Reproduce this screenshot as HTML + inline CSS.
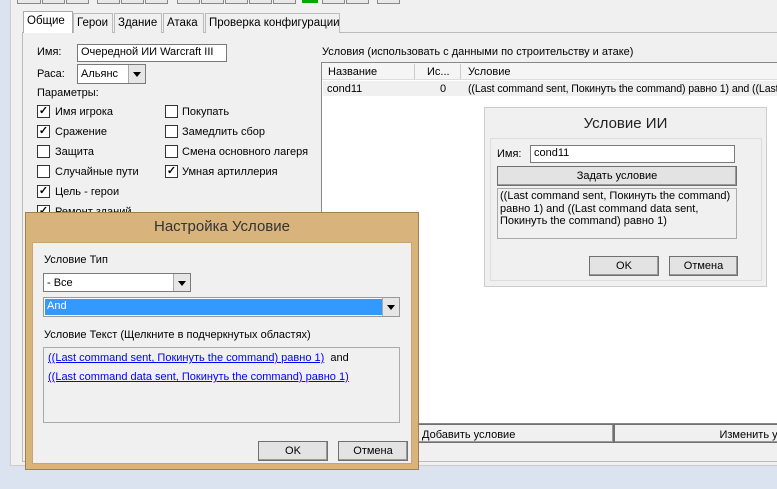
<!DOCTYPE html>
<html><head><meta charset="utf-8"><style>
*{margin:0;padding:0;box-sizing:border-box}
body{width:777px;height:489px;overflow:hidden;background:#dae3ef;position:relative;font-family:"Liberation Sans",sans-serif;font-size:11px;color:#000}
.a{position:absolute;white-space:nowrap}
.win{left:10px;top:0;width:767px;height:466px;background:#f0f0f0;border-left:1px solid #ccc;border-bottom:1px solid #ccc}
.tb{top:0;height:4px;border:1px solid #888;border-top:none;background:#e8e8e8}
.tab{top:13px;height:20px;border:1px solid #bbb;border-bottom:none;background:#f0f0f0;padding:3px 3px;font-size:11.5px;white-space:nowrap;overflow:hidden}
.panel{left:22px;top:32px;width:755px;height:430px;border:1px solid #bbb;border-right:none;background:#f0f0f0}
.inp{background:#fff;border:1px solid #7a7a7a;padding:1px 3px;font-size:11px}
.cb{width:13px;height:13px;border:1px solid #333;background:#fff;font-size:11px;line-height:11px;text-align:center;font-weight:bold}
.btn{border:1px solid #707070;background:#e3e3e3;text-align:center;font-size:11px;box-shadow:inset -1px -1px 0 #999}
.arr{width:17px;border-left:1px solid #aaa;background:#e6e6e6}
.arr:after{content:"";position:absolute;left:4px;top:7px;border:4px solid transparent;border-top:5px solid #000}
a{color:#0000ff;text-decoration:underline}
</style></head><body>
<div class="a win"></div>
<div class="a tb" style="left:17px;width:24px"></div><div class="a tb" style="left:42px;width:23px"></div><div class="a tb" style="left:66px;width:23px"></div>
<div class="a tb" style="left:97px;width:23px"></div><div class="a tb" style="left:121px;width:23px"></div><div class="a tb" style="left:145px;width:23px"></div>
<div class="a tb" style="left:177px;width:23px"></div><div class="a tb" style="left:201px;width:23px"></div><div class="a tb" style="left:225px;width:23px"></div><div class="a tb" style="left:249px;width:23px"></div><div class="a tb" style="left:273px;width:23px"></div>
<div class="a" style="left:302px;top:0;width:16px;height:3px;background:#0a0"></div>
<div class="a tb" style="left:322px;width:23px"></div><div class="a tb" style="left:346px;width:23px"></div><div class="a tb" style="left:377px;width:23px"></div>
<div class="a panel"></div>
<div class="a tab" style="left:23px;top:11px;height:22px;width:50px;background:#fff;border-color:#aaa">Общие</div>
<div class="a tab" style="left:73px;width:40px">Герои</div>
<div class="a tab" style="left:114px;width:48px">Здание</div>
<div class="a tab" style="left:163px;width:41px">Атака</div>
<div class="a tab" style="left:205px;width:135px">Проверка конфигурации</div>
<div class="a" style="left:37px;top:46px">Имя:</div>
<div class="a inp" style="left:77px;top:44px;width:150px;height:18px">Очередной ИИ Warcraft III</div>
<div class="a" style="left:37px;top:68px">Раса:</div>
<div class="a inp" style="left:77px;top:64px;width:69px;height:20px;padding-top:3px">Альянс</div>
<div class="a arr" style="left:128px;top:65px;height:18px"></div>
<div class="a" style="left:37px;top:87px">Параметры:</div>
<div class="a cb" style="left:37px;top:105px">✓</div><div class="a" style="left:55px;top:106px">Имя игрока</div>
<div class="a cb" style="left:37px;top:125px">✓</div><div class="a" style="left:55px;top:126px">Сражение</div>
<div class="a cb" style="left:37px;top:145px"></div><div class="a" style="left:55px;top:146px">Защита</div>
<div class="a cb" style="left:37px;top:165px"></div><div class="a" style="left:55px;top:166px">Случайные пути</div>
<div class="a cb" style="left:37px;top:185px">✓</div><div class="a" style="left:55px;top:186px">Цель - герои</div>
<div class="a cb" style="left:37px;top:205px">✓</div><div class="a" style="left:55px;top:206px">Ремонт зданий</div>
<div class="a cb" style="left:165px;top:105px"></div><div class="a" style="left:182px;top:106px">Покупать</div>
<div class="a cb" style="left:165px;top:125px"></div><div class="a" style="left:182px;top:126px">Замедлить сбор</div>
<div class="a cb" style="left:165px;top:145px"></div><div class="a" style="left:182px;top:146px">Смена основного лагеря</div>
<div class="a cb" style="left:165px;top:165px">✓</div><div class="a" style="left:182px;top:166px">Умная артиллерия</div>
<div class="a" style="left:322px;top:46px">Условия (использовать с данными по строительству и атаке)</div>
<div class="a" style="left:321px;top:62px;width:456px;height:362px;background:#fff;border:1px solid #888;border-right:none"></div>
<div class="a" style="left:322px;top:63px;width:455px;height:17px;background:#f5f5f5;border-bottom:1px solid #ddd"></div>
<div class="a" style="left:328px;top:66px">Название</div>
<div class="a" style="left:414px;top:64px;width:1px;height:15px;background:#ccc"></div>
<div class="a" style="left:427px;top:66px">Ис...</div>
<div class="a" style="left:460px;top:64px;width:1px;height:15px;background:#ccc"></div>
<div class="a" style="left:468px;top:66px">Условие</div>
<div class="a" style="left:323px;top:81px;width:454px;height:15px;background:#f0f0f0"></div>
<div class="a" style="left:327px;top:83px">cond11</div>
<div class="a" style="left:440px;top:83px">0</div>
<div class="a" style="left:468px;top:83px;font-size:10.6px;letter-spacing:-0.1px">((Last command sent, Покинуть the command) равно 1) and ((Last</div>
<div class="a btn" style="left:418px;top:424px;width:196px;height:19px;text-align:left;padding:4px 3px;background:#f0f0f0">Добавить условие</div>
<div class="a btn" style="left:614px;top:424px;width:170px;height:19px;text-align:right;padding:4px 0;background:#f0f0f0;overflow:hidden">Изменить ус</div>
<!-- Условие ИИ -->
<div class="a" style="left:484px;top:107px;width:283px;height:180px;background:#f0f0f0;border:1px solid #ccc"></div>
<div class="a" style="left:484px;top:115px;width:283px;text-align:center;font-size:15px;color:#222">Условие ИИ</div>
<div class="a" style="left:490px;top:138px;width:272px;height:143px;border:1px solid #ddd"></div>
<div class="a" style="left:497px;top:148px">Имя:</div>
<div class="a inp" style="left:530px;top:145px;width:205px;height:18px">cond11</div>
<div class="a btn" style="left:497px;top:166px;width:240px;height:20px;padding-top:3px">Задать условие</div>
<div class="a" style="left:497px;top:188px;width:240px;height:51px;border:1px solid #aaa;padding:1px 2px;line-height:12.5px;white-space:normal">((Last command sent, Покинуть the command)<br>равно 1) and ((Last command data sent,<br>Покинуть the command) равно 1)</div>
<div class="a btn" style="left:589px;top:256px;width:70px;height:20px;padding-top:3px">OK</div>
<div class="a btn" style="left:669px;top:256px;width:69px;height:20px;padding-top:3px">Отмена</div>
<!-- Настройка -->
<div class="a" style="left:25px;top:212px;width:394px;height:258px;background:#d8b47c;border:1px solid #a08050"></div>
<div class="a" style="left:25px;top:218px;width:394px;text-align:center;font-size:15px;color:#333">Настройка Условие</div>
<div class="a" style="left:32px;top:242px;width:380px;height:222px;background:#f0f0f0;border:1px solid #c8a570"></div>
<div class="a" style="left:44px;top:254px">Условие Тип</div>
<div class="a inp" style="left:43px;top:273px;width:148px;height:19px;padding-top:3px">- Все</div>
<div class="a arr" style="left:173px;top:274px;height:17px"></div>
<div class="a" style="left:43px;top:297px;width:357px;height:20px;border:1px solid #999;background:#fff"></div>
<div class="a" style="left:45px;top:299px;width:337px;height:16px;background:#3399ff;color:#fff;padding:1px 2px">And</div>
<div class="a arr" style="left:382px;top:298px;height:18px"></div>
<div class="a" style="left:44px;top:329px">Условие Текст (Щелкните в подчеркнутых областях)</div>
<div class="a" style="left:43px;top:347px;width:357px;height:76px;border:1px solid #aaa"></div>
<div class="a" style="left:48px;top:352px"><a>((Last command sent, Покинуть the command) равно 1)</a>&nbsp; and</div>
<div class="a" style="left:48px;top:371px"><a>((Last command data sent, Покинуть the command) равно 1)</a></div>
<div class="a btn" style="left:258px;top:441px;width:70px;height:20px;padding-top:3px">OK</div>
<div class="a btn" style="left:338px;top:441px;width:70px;height:20px;padding-top:3px">Отмена</div>
</body></html>
